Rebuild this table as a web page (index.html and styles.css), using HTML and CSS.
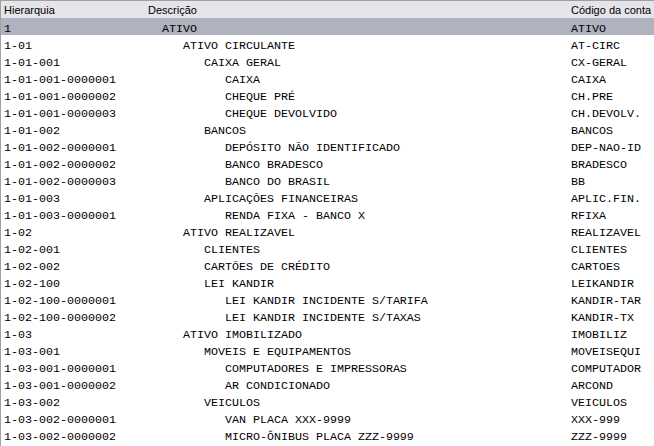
FILE: index.html
```html
<!DOCTYPE html>
<html>
<head>
<meta charset="utf-8">
<link rel="stylesheet" href="styles.css">
</head>
<body>
<div class="grid">
  <div class="row head">
    <div class="c1">Hierarquia</div>
    <div class="c2">Descrição</div>
    <div class="c3">Código da conta</div>
  </div>
  <div class="body">
    <div class="row sel"><div class="c1">1</div><div class="c2 l1">ATIVO</div><div class="c3">ATIVO</div></div>
    <div class="row"><div class="c1">1-01</div><div class="c2 l2">ATIVO CIRCULANTE</div><div class="c3">AT-CIRC</div></div>
    <div class="row"><div class="c1">1-01-001</div><div class="c2 l3">CAIXA GERAL</div><div class="c3">CX-GERAL</div></div>
    <div class="row"><div class="c1">1-01-001-0000001</div><div class="c2 l4">CAIXA</div><div class="c3">CAIXA</div></div>
    <div class="row"><div class="c1">1-01-001-0000002</div><div class="c2 l4">CHEQUE PRÉ</div><div class="c3">CH.PRE</div></div>
    <div class="row"><div class="c1">1-01-001-0000003</div><div class="c2 l4">CHEQUE DEVOLVIDO</div><div class="c3">CH.DEVOLV.</div></div>
    <div class="row"><div class="c1">1-01-002</div><div class="c2 l3">BANCOS</div><div class="c3">BANCOS</div></div>
    <div class="row"><div class="c1">1-01-002-0000001</div><div class="c2 l4">DEPÓSITO NÃO IDENTIFICADO</div><div class="c3">DEP-NAO-ID</div></div>
    <div class="row"><div class="c1">1-01-002-0000002</div><div class="c2 l4">BANCO BRADESCO</div><div class="c3">BRADESCO</div></div>
    <div class="row"><div class="c1">1-01-002-0000003</div><div class="c2 l4">BANCO DO BRASIL</div><div class="c3">BB</div></div>
    <div class="row"><div class="c1">1-01-003</div><div class="c2 l3">APLICAÇÕES FINANCEIRAS</div><div class="c3">APLIC.FIN.</div></div>
    <div class="row"><div class="c1">1-01-003-0000001</div><div class="c2 l4">RENDA FIXA - BANCO X</div><div class="c3">RFIXA</div></div>
    <div class="row"><div class="c1">1-02</div><div class="c2 l2">ATIVO REALIZAVEL</div><div class="c3">REALIZAVEL</div></div>
    <div class="row"><div class="c1">1-02-001</div><div class="c2 l3">CLIENTES</div><div class="c3">CLIENTES</div></div>
    <div class="row"><div class="c1">1-02-002</div><div class="c2 l3">CARTÕES DE CRÉDITO</div><div class="c3">CARTOES</div></div>
    <div class="row"><div class="c1">1-02-100</div><div class="c2 l3">LEI KANDIR</div><div class="c3">LEIKANDIR</div></div>
    <div class="row"><div class="c1">1-02-100-0000001</div><div class="c2 l4">LEI KANDIR INCIDENTE S/TARIFA</div><div class="c3">KANDIR-TAR</div></div>
    <div class="row"><div class="c1">1-02-100-0000002</div><div class="c2 l4">LEI KANDIR INCIDENTE S/TAXAS</div><div class="c3">KANDIR-TX</div></div>
    <div class="row"><div class="c1">1-03</div><div class="c2 l2">ATIVO IMOBILIZADO</div><div class="c3">IMOBILIZ</div></div>
    <div class="row"><div class="c1">1-03-001</div><div class="c2 l3">MOVEIS E EQUIPAMENTOS</div><div class="c3">MOVEISEQUI</div></div>
    <div class="row"><div class="c1">1-03-001-0000001</div><div class="c2 l4">COMPUTADORES E IMPRESSORAS</div><div class="c3">COMPUTADOR</div></div>
    <div class="row"><div class="c1">1-03-001-0000002</div><div class="c2 l4">AR CONDICIONADO</div><div class="c3">ARCOND</div></div>
    <div class="row"><div class="c1">1-03-002</div><div class="c2 l3">VEICULOS</div><div class="c3">VEICULOS</div></div>
    <div class="row"><div class="c1">1-03-002-0000001</div><div class="c2 l4">VAN PLACA XXX-9999</div><div class="c3">XXX-999</div></div>
    <div class="row"><div class="c1">1-03-002-0000002</div><div class="c2 l4">MICRO-ÔNIBUS PLACA ZZZ-9999</div><div class="c3">ZZZ-9999</div></div>
  </div>
</div>
</body>
</html>
```
FILE: styles.css
```css
html, body {
  margin: 0;
  padding: 0;
  background: #ffffff;
  width: 654px;
  height: 446px;
  overflow: hidden;
}
.grid {
  border-top: 1px solid #a0a0a0;
  border-left: 1px solid #a0a0a0;
  height: 446px;
  box-sizing: border-box;
}
.row {
  display: grid;
  grid-template-columns: 144px 423px 86px;
  height: 17px;
  align-items: center;
  white-space: nowrap;
}
.row > div {
  padding-left: 3px;
  overflow: hidden;
}
.head {
  background: #e4e4e9;
  font-family: "Liberation Sans", Arial, sans-serif;
  font-size: 11px;
  color: #000;
}
.body .row {
  font-family: "Liberation Mono", "Courier New", monospace;
  font-size: 11.67px;
  color: #000;
  padding-top: 5px;
  box-sizing: border-box;
}
.body .sel {
  background: #afb2bf;
}
.c2.l1 { padding-left: 17px; }
.c2.l2 { padding-left: 38px; }
.c2.l3 { padding-left: 59px; }
.c2.l4 { padding-left: 80px; }
```
